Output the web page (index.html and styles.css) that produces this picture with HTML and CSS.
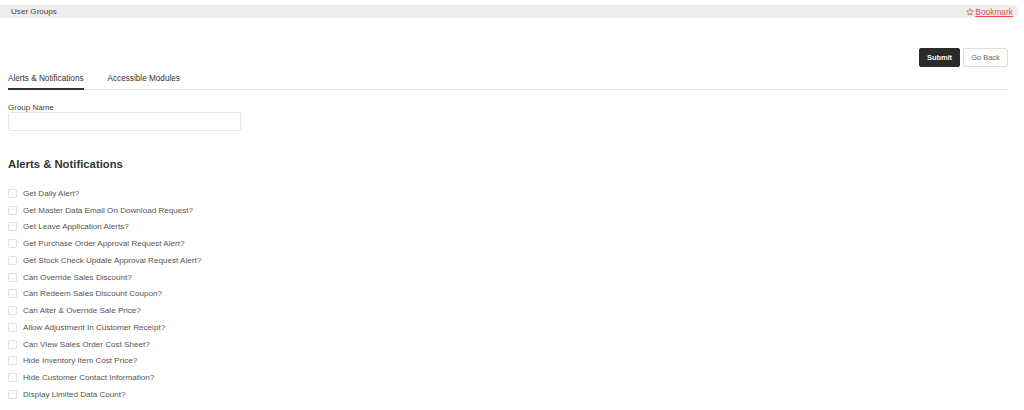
FILE: index.html
```html
<!DOCTYPE html>
<html>
<head>
<meta charset="utf-8">
<link rel="stylesheet" href="styles.css">
</head>
<body>
<div class="topbar">
  <span class="title">User Groups</span>
  <a class="bookmark" href="#"><svg class="star" viewBox="0 0 10 10" width="8" height="8"><path d="M5 0.8 L6.2 3.6 L9.2 3.8 L6.9 5.8 L7.6 8.8 L5 7.2 L2.4 8.8 L3.1 5.8 L0.8 3.8 L3.8 3.6 Z" fill="none" stroke="#e44" stroke-width="0.9" stroke-linejoin="round"/></svg>Bookmark</a>
</div>
<div class="content">
  <div class="actions">
    <button class="btn btn-dark">Submit</button>
    <button class="btn btn-light">Go Back</button>
  </div>
  <div class="tabs">
    <div class="tab active">Alerts &amp; Notifications</div>
    <div class="tab">Accessible Modules</div>
  </div>
  <div class="field">
    <label class="label">Group Name</label>
    <input class="input" type="text">
  </div>
  <h2 class="heading">Alerts &amp; Notifications</h2>
  <ul class="checks">
    <li><span class="box"></span>Get Daily Alert?</li>
    <li><span class="box"></span>Get Master Data Email On Download Request?</li>
    <li><span class="box"></span>Get Leave Application Alerts?</li>
    <li><span class="box"></span>Get Purchase Order Approval Request Alert?</li>
    <li><span class="box"></span>Get Stock Check Update Approval Request Alert?</li>
    <li><span class="box"></span>Can Override Sales Discount?</li>
    <li><span class="box"></span>Can Redeem Sales Discount Coupon?</li>
    <li><span class="box"></span>Can Alter &amp; Override Sale Price?</li>
    <li><span class="box"></span>Allow Adjustment In Customer Receipt?</li>
    <li><span class="box"></span>Can View Sales Order Cost Sheet?</li>
    <li><span class="box"></span>Hide Inventory Item Cost Price?</li>
    <li><span class="box"></span>Hide Customer Contact Information?</li>
    <li><span class="box"></span>Display Limited Data Count?</li>
  </ul>
</div>
</body>
</html>
```
FILE: styles.css
```css
* { box-sizing: border-box; }
html, body { margin: 0; padding: 0; background: #fff; }
body {
  font-family: "Liberation Sans", Arial, sans-serif;
  font-size: 8.1px;
  color: #333;
  overflow: hidden;
  height: 410px;
}
.topbar {
  margin: 5px 5px 0 0;
  height: 13px;
  background: #eeeeee;
  border-radius: 0 7px 7px 0;
  display: flex;
  align-items: center;
  justify-content: space-between;
  padding: 0 6px 0 11px;
}
.title { color: #444; font-size: 8.1px; }
.bookmark {
  color: #ea4a4a;
  text-decoration: underline;
  font-size: 8.4px;
  display: flex;
  align-items: center;
  gap: 1px;
}
.star { display: block; }
.content { padding: 0 16px 0 8px; }
.actions {
  display: flex;
  justify-content: flex-end;
  gap: 3px;
  margin-top: 30px;
}
.btn {
  font-family: "Liberation Sans", Arial, sans-serif;
  font-size: 7.4px;
  height: 19px;
  border-radius: 2px;
  cursor: pointer;
}
.btn-dark { width: 41px; background: #2b2b2b; color: #f3f3f3; border: 1px solid #2b2b2b; font-weight: bold; padding: 0; }
.btn-light { width: 45px; background: #fff; color: #666; border: 1px solid #ddd; padding: 0; }
.tabs {
  display: flex;
  gap: 24px;
  border-bottom: 1px solid #e3e3e3;
  margin-top: 4px;
}
.tab {
  padding: 3px 0 5px;
  color: #333;
  font-size: 8.2px;
  margin-bottom: -1px;
  border-bottom: 2px solid transparent;
}
.tab.active { border-bottom-color: #333; }
.field { margin-top: 13px; }
.label { display: block; font-size: 8px; color: #444; margin-bottom: 0; }
.input {
  display: block;
  width: 233px;
  height: 19px;
  border: 1px solid #e6e6e6;
  border-radius: 2px;
  background: #fff;
}
.heading {
  margin: 26px 0 0;
  font-size: 11.3px;
  font-weight: bold;
  color: #333;
  line-height: 15px;
}
.checks {
  list-style: none;
  margin: 13px 0 0;
  padding: 0;
}
.checks li {
  display: flex;
  align-items: center;
  height: 16.75px;
  font-size: 8.1px;
  color: #555;
}
.box {
  width: 9px;
  height: 9px;
  border: 1px solid #e2e2e2;
  border-radius: 1px;
  margin-right: 6px;
  flex: none;
}
```
